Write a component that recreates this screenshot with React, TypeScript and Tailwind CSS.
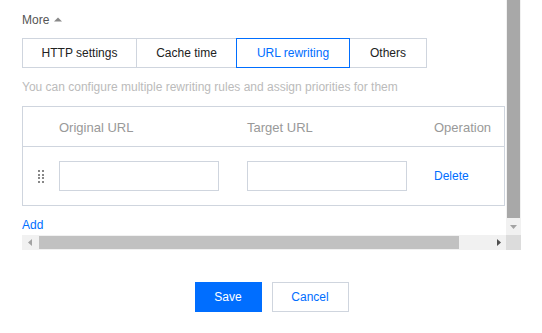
const tabs = [
  { label: 'HTTP settings', w: 'w-[115px]' },
  { label: 'Cache time', w: 'w-[101px]' },
  { label: 'URL rewriting', w: 'w-[114px]' },
  { label: 'Others', w: 'w-[78px]' },
]

function DragHandle() {
  return (
    <svg width="6" height="13" viewBox="0 0 6 13" className="block">
      {[0, 4, 7, 11].map((y) => (
        <g key={y} fill="#888">
          <rect x="0" y={y} width="2" height="2" />
          <rect x="4" y={y} width="2" height="2" />
        </g>
      ))}
    </svg>
  )
}

// the page draws classic scrollbars for the panel; they are drawn by hand here
function VScrollbar() {
  return (
    <div className="w-[15px] h-[235px] bg-[#f1f1f1] flex flex-col">
      <div className="h-[218px] mx-[1px] bg-[#a8a8a8]" />
      <div className="flex-1 flex items-center justify-center">
        <svg width="7" height="4" viewBox="0 0 7 4">
          <path d="M0 0 H7 L3.5 4 Z" fill="#a3a3a3" />
        </svg>
      </div>
    </div>
  )
}

function HScrollbar() {
  return (
    <div className="h-[15px] w-[484px] bg-[#f1f1f1] flex items-center">
      <div className="w-[15px] h-full flex items-center justify-center">
        <svg width="4" height="7" viewBox="0 0 4 7">
          <path d="M4 0 V7 L0 3.5 Z" fill="#a3a3a3" />
        </svg>
      </div>
      <div className="ml-[2px] w-[420px] h-[13px] bg-[#c1c1c1]" />
      <div className="flex-1" />
      <div className="w-[15px] h-full flex items-center justify-center">
        <svg width="4" height="7" viewBox="0 0 4 7">
          <path d="M0 0 V7 L4 3.5 Z" fill="#505050" />
        </svg>
      </div>
    </div>
  )
}

export default function App() {
  return (
    <div
      className="bg-white w-[542px] h-[333px] overflow-hidden text-[12px] text-[#333]"
      style={{ fontFamily: '"Liberation Sans", Arial, sans-serif' }}
    >
      <div className="ml-[22px] flex">
        <div className="w-[484px]">
          <div className="h-[235px] overflow-hidden pt-[10px]">
            <div className="flex items-center h-5 text-[#555]">
              <span>More</span>
              <svg width="8" height="5" viewBox="0 0 8 5" className="ml-[5px] -mt-[1px]">
                <path d="M0 4.5 L4 0.5 L8 4.5 Z" fill="#888" />
              </svg>
            </div>

            <div className="flex mt-2">
              {tabs.map((t, i) => {
                const active = t.label === 'URL rewriting'
                return (
                  <div
                    key={t.label}
                    className={`h-[30px] ${t.w} flex items-center justify-center border ${i > 0 ? '-ml-px' : ''} ${active
                      ? 'border-[#006eff] text-[#006eff] relative z-10'
                      : 'border-[#cfd5de] text-[#222]'
                      }`}
                  >
                    {t.label}
                  </div>
                )
              })}
            </div>

            <div className="mt-[9px] h-5 leading-5 text-[#bbb] whitespace-nowrap">
              You can configure multiple rewriting rules and assign priorities for them
            </div>

            <div className="mt-[9px] w-[483px] border border-[#cfd5de]">
              <div className="flex h-[40px] items-center pt-[2px] border-b border-[#cfd5de] text-[#999] text-[13px]">
                <div className="w-[24px]" />
                <div className="w-[188px] pl-3">Original URL</div>
                <div className="w-[187px] pl-3">Target URL</div>
                <div className="pl-3">Operation</div>
              </div>
              <div className="flex h-[58px] items-center">
                <div className="w-[24px] pl-[15px]">
                  <DragHandle />
                </div>
                <div className="w-[188px] pl-3">
                  <input className="block w-[160px] h-[30px] border border-[#cfd5de] outline-none px-2" />
                </div>
                <div className="w-[187px] pl-3">
                  <input className="block w-[160px] h-[30px] border border-[#cfd5de] outline-none px-2" />
                </div>
                <div className="pl-3">
                  <a className="text-[#006eff] cursor-pointer">Delete</a>
                </div>
              </div>
            </div>

            <div className="mt-[10px] h-[18px] leading-[18px]">
              <a className="text-[#006eff] cursor-pointer">Add</a>
            </div>
          </div>
          <HScrollbar />
        </div>
        <div className="flex flex-col">
          <VScrollbar />
          <div className="w-[15px] h-[15px] bg-[#dcdcdc]" />
        </div>
      </div>

      <div className="ml-[22px] w-[499px] mt-8 flex justify-center gap-[10px]">
        <button className="h-[30px] w-[67px] bg-[#006eff] text-white">Save</button>
        <button className="h-[30px] w-[77px] border border-[#cfd5de] text-[#006eff] bg-white">
          Cancel
        </button>
      </div>
    </div>
  )
}
